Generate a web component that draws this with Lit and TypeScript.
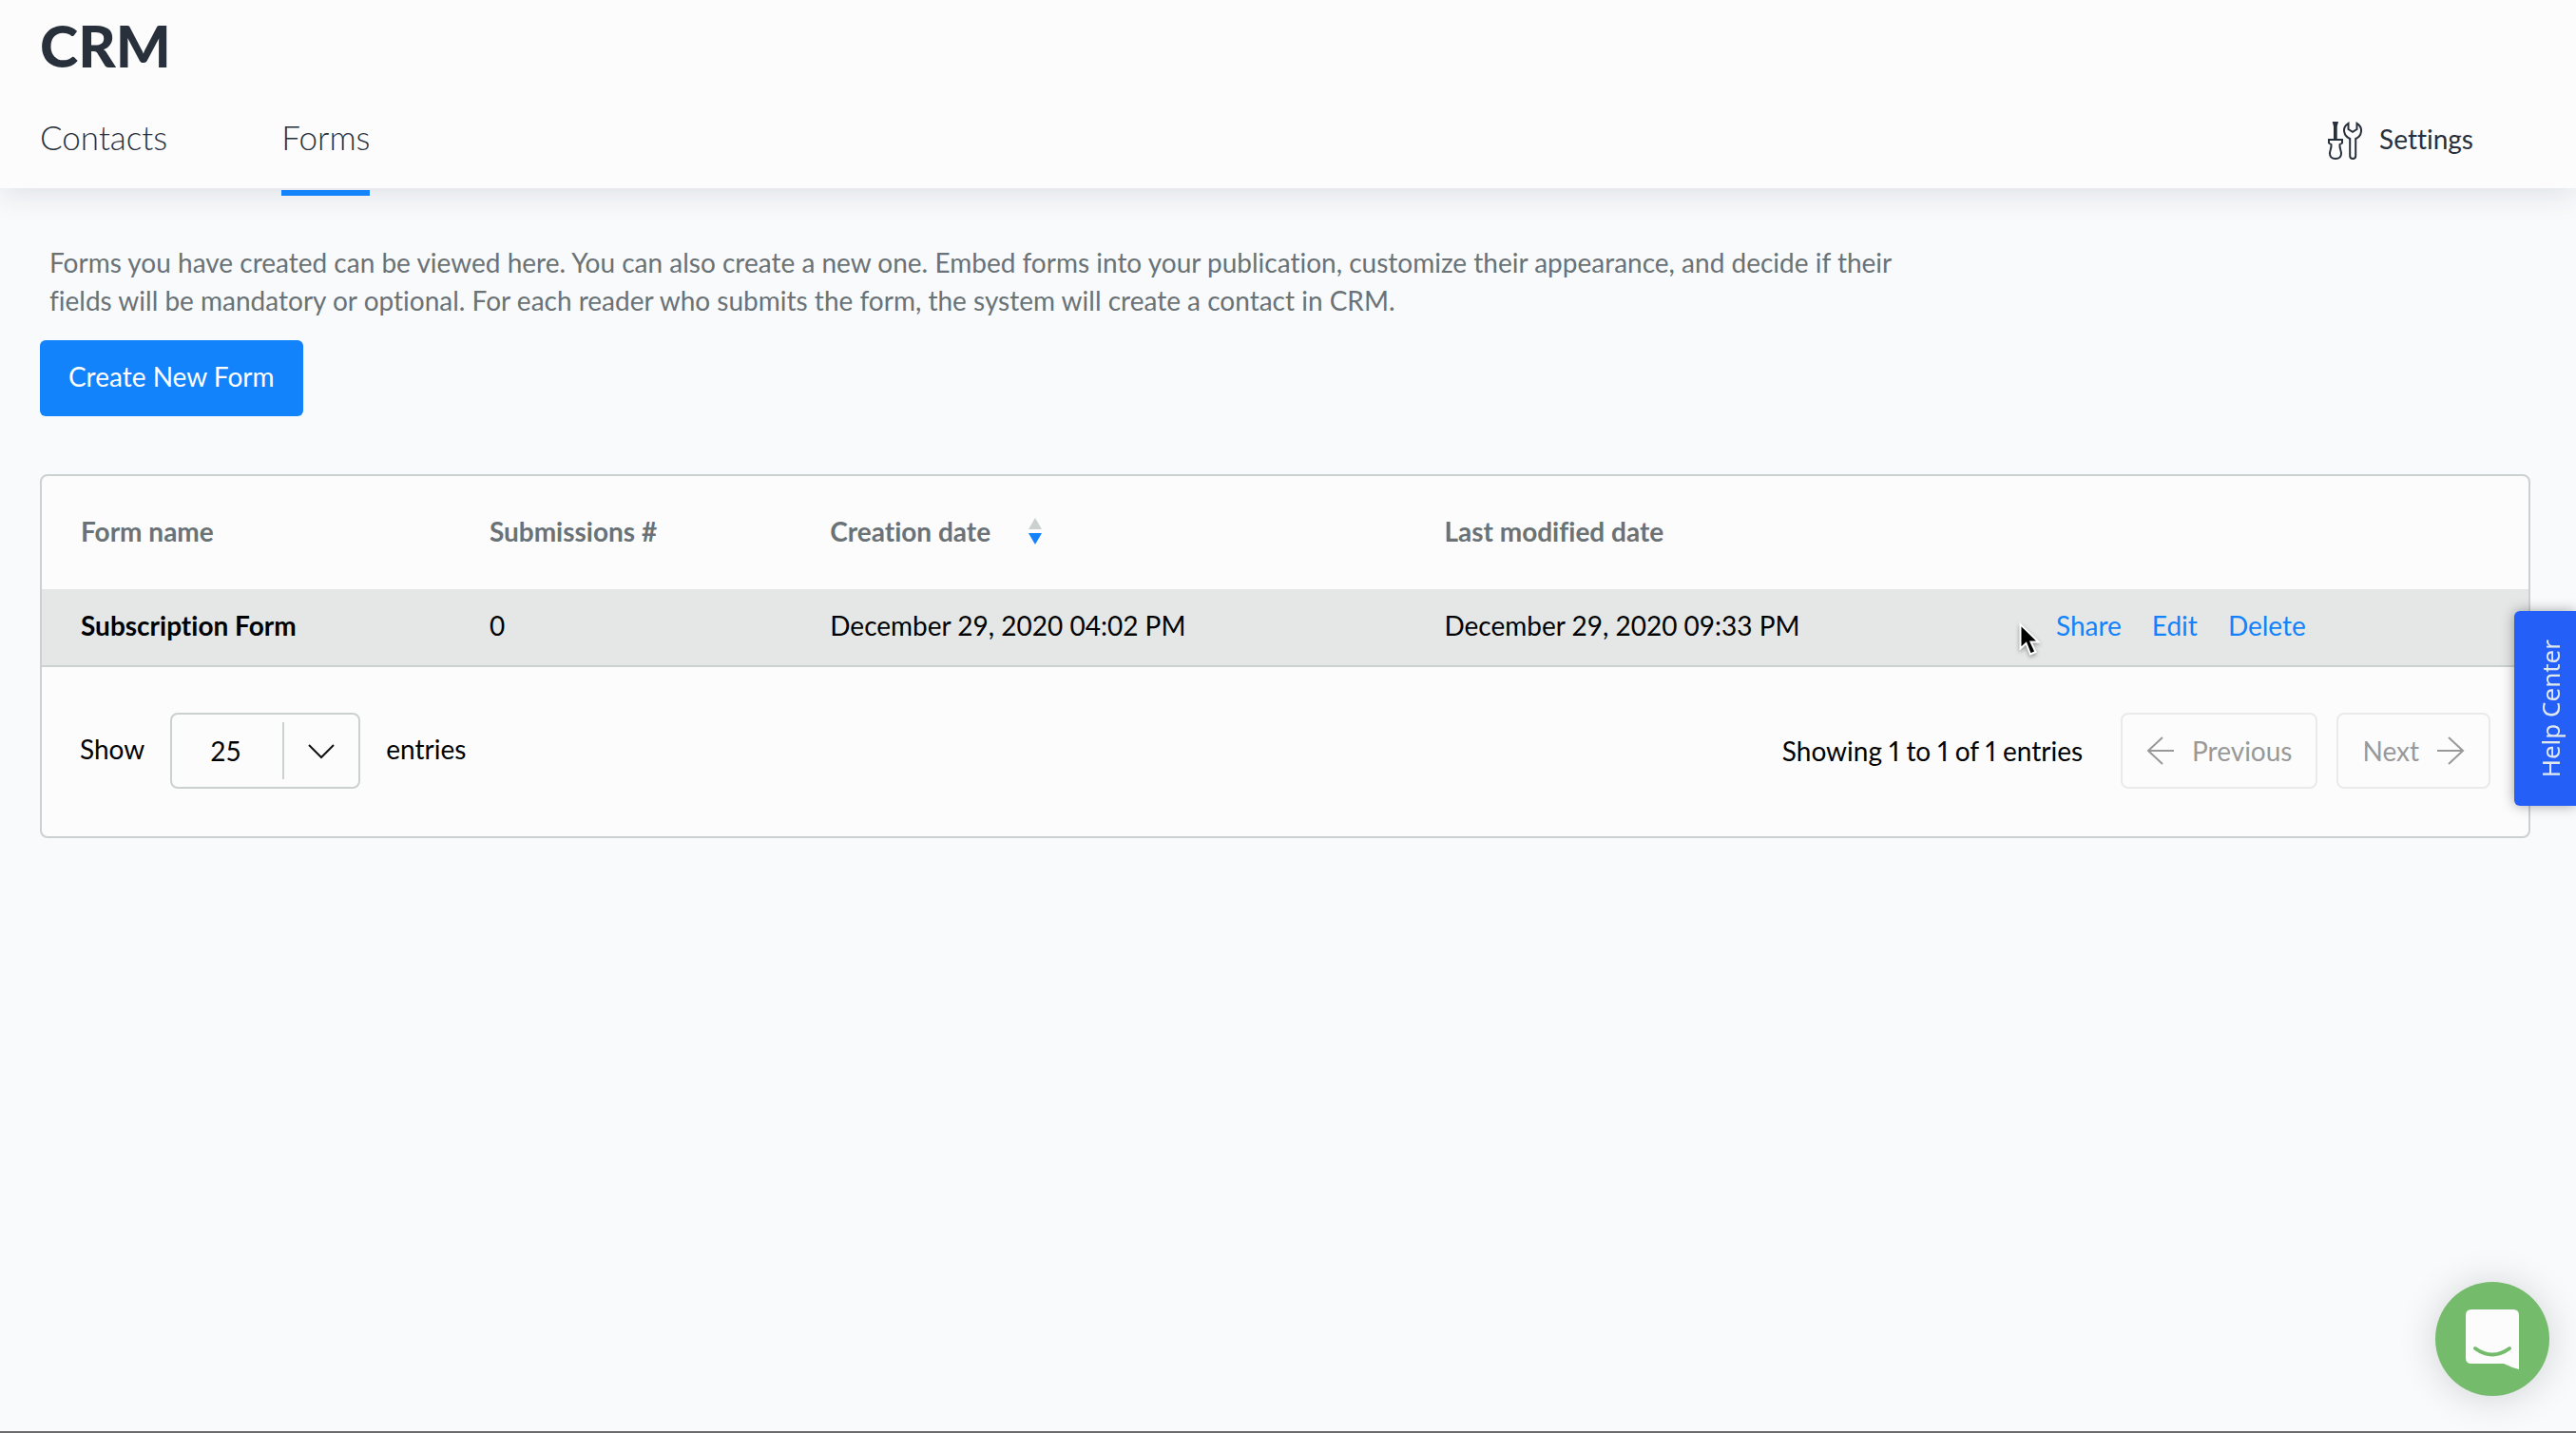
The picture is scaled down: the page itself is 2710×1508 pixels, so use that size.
import { LitElement, html, css, svg } from "lit";
import { customElement, property, state } from "lit/decorators.js";

interface FormEntry {
  name: string;
  submissions: number;
  created: string;
  modified: string;
}

const toolsIcon = svg`
  <svg width="36" height="42" viewBox="0 0 36 42" fill="none" stroke="#28303c" stroke-width="2" stroke-linejoin="miter" aria-hidden="true">
    <path d="M4.700 0h6.300l-1.300 5v13.500H6V5z" fill="#28303c" stroke="none"/>
    <path d="M1 19h14v3.500l-2.500 1.500c-.5 4 1.500 6 1.500 9.500 0 4-2.500 5.500-6 5.500s-6-1.500-6-5.500c0-3.500 2-5.500 1.500-9.500L1 22.500z"/>
    <path d="M21.500 1.800c-3.500 2.200-5 5.400-4.300 9 .6 3.400 2.800 5.800 6 7.200V36c0 4 6 4 6 0V18c3.200-1.400 5.200-3.800 5.700-7.200.6-3.600-.9-6.800-4.400-9V8L26 10.800 21.500 8z"/>
  </svg>`;

const arrowLeft = svg`
  <svg width="30" height="30" viewBox="0 0 30 30" fill="none" stroke="currentColor" stroke-width="2" aria-hidden="true">
    <path d="M29 15H2M17 1L2 15l15 14"/>
  </svg>`;

const arrowRight = svg`
  <svg width="30" height="30" viewBox="0 0 30 30" fill="none" stroke="currentColor" stroke-width="2" aria-hidden="true">
    <path d="M1 15h27M13 1l15 14-15 14"/>
  </svg>`;

@customElement("crm-header")
class CrmHeader extends LitElement {
  @property() current = "Forms";

  static styles = css`
    :host {
      display: block;
      position: relative;
      background: #fcfcfc;
      color: #28303c;
      box-shadow: 0 6px 30px rgba(40, 48, 60, 0.12);
    }
    .title {
      margin: 0;
      padding: 12px 42px 0;
      font-size: 61px;
      line-height: 72px;
      font-weight: 900;
    }
    .bar {
      display: flex;
      justify-content: space-between;
      align-items: flex-start;
      padding: 24px 108px 0 42px;
    }
    .tabs {
      display: flex;
      gap: 120px;
      height: 90px;
    }
    .tab {
      box-sizing: border-box;
      height: 98px;
      padding-top: 14px;
      font-size: 35px;
      line-height: 44px;
      font-weight: 300;
      color: inherit;
      text-decoration: none;
    }
    .tab.active {
      border-bottom: 6px solid #1283fb;
    }
    .settings {
      display: flex;
      align-items: center;
      gap: 18px;
      margin-top: 18px;
      padding: 0;
      border: 0;
      background: none;
      font: inherit;
      color: inherit;
    }
    .settings-label {
      padding-bottom: 6px;
      line-height: 40px;
    }
  `;

  render() {
    return html`
      <h1 class="title">CRM</h1>
      <div class="bar">
        <nav class="tabs">
          ${["Contacts", "Forms"].map(
            (t) => html`<a href="#${t.toLowerCase()}" class="tab ${t === this.current ? "active" : ""}">${t}</a>`
          )}
        </nav>
        <button class="settings" type="button">${toolsIcon}<span class="settings-label">Settings</span></button>
      </div>
    `;
  }
}

@customElement("forms-table")
class FormsTable extends LitElement {
  @property({ attribute: false }) entries: FormEntry[] = [];

  static styles = css`
    :host {
      display: block;
      border: 2px solid #cbd1d0;
      border-radius: 8px;
      background: #fcfcfc;
      color: #000;
    }
    .table {
      width: 100%;
      table-layout: fixed;
      border-collapse: separate;
      border-spacing: 0;
    }
    .c-name { width: 18%; }
    .c-count { width: 13.7%; }
    .c-created { width: 24.7%; }
    .c-modified { width: 24.6%; }
    th,
    td {
      box-sizing: border-box;
      padding: 0 0 4px;
      text-align: left;
      white-space: nowrap;
    }
    th {
      height: 119px;
      font-weight: 700;
      color: #6a7276;
    }
    td {
      height: 82px;
      background: #e4e7e5;
      border-bottom: 2px solid #cbd1d0;
    }
    th:first-child,
    td:first-child {
      padding-left: 41px;
    }
    .name {
      font-weight: 700;
    }
    .sort {
      display: inline-flex;
      align-items: center;
      gap: 40px;
      padding: 0;
      border: 0;
      background: none;
      font: inherit;
      color: inherit;
    }
    .actions {
      display: flex;
      gap: 32px;
    }
    .link {
      color: #1283fb;
      text-decoration: none;
    }
    .footer {
      display: flex;
      justify-content: space-between;
      align-items: center;
      padding: 48px 40px 50px;
    }
    .length {
      display: flex;
      align-items: center;
      gap: 27px;
    }
    .caption {
      padding-bottom: 4px;
    }
    .picker {
      position: relative;
      display: block;
    }
    .select {
      display: block;
      box-sizing: border-box;
      width: 200px;
      height: 80px;
      padding: 0 0 0 40px;
      border: 2px solid #cbd1d0;
      border-radius: 8px;
      background: transparent;
      appearance: none;
      font: inherit;
      color: #000;
    }
    .chevron {
      position: absolute;
      top: 10px;
      right: 0;
      pointer-events: none;
    }
    .pager {
      display: flex;
      align-items: center;
      gap: 20px;
    }
    .info {
      margin-right: 20px;
      font-variant-numeric: proportional-nums;
    }
    .page {
      display: flex;
      align-items: center;
      justify-content: center;
      gap: 18px;
      height: 80px;
      padding: 0 25px;
      border: 2px solid #e8ebea;
      border-radius: 8px;
      box-sizing: border-box;
      background: transparent;
      font: inherit;
      color: #999;
    }
  `;

  render() {
    return html`
      <table class="table">
        <colgroup>
          <col class="c-name" /><col class="c-count" /><col class="c-created" /><col class="c-modified" /><col />
        </colgroup>
        <thead>
          <tr>
            <th>Form name</th>
            <th>Submissions #</th>
            <th>
              <button class="sort" type="button">
                Creation date
                <svg width="14" height="28" viewBox="0 0 14 28" aria-hidden="true">
                  <path d="M7 0l7 12H0z" fill="#cbd1d0" />
                  <path d="M7 28l7-12H0z" fill="#1283fb" />
                </svg>
              </button>
            </th>
            <th>Last modified date</th>
            <th></th>
          </tr>
        </thead>
        <tbody>
          ${this.entries.map(
            (e) => html`
              <tr>
                <td class="name">${e.name}</td>
                <td>${e.submissions}</td>
                <td>${e.created}</td>
                <td>${e.modified}</td>
                <td>
                  <div class="actions">
                    <a class="link" href="#share">Share</a>
                    <a class="link" href="#edit">Edit</a>
                    <a class="link" href="#delete">Delete</a>
                  </div>
                </td>
              </tr>
            `
          )}
        </tbody>
      </table>
      <div class="footer">
        <div class="length">
          <label class="caption" for="length">Show</label>
          <span class="picker">
            <select id="length" class="select">
              <option>25</option>
              <option>50</option>
              <option>100</option>
            </select>
            <svg class="chevron" width="82" height="60" viewBox="0 0 82 60" fill="none" aria-hidden="true">
              <path d="M1 0v60" stroke="#cbd1d0" stroke-width="2" />
              <path d="M28 24l13 13 13-13" stroke="#111" stroke-width="2" />
            </svg>
          </span>
          <span class="caption">entries</span>
        </div>
        <div class="pager">
          <span class="info">Showing 1 to ${this.entries.length} of ${this.entries.length} entries</span>
          <button class="page" type="button" disabled>${arrowLeft}<span>Previous</span></button>
          <button class="page" type="button" disabled><span>Next</span>${arrowRight}</button>
        </div>
      </div>
    `;
  }
}

@customElement("app-root")
class AppRoot extends LitElement {
  @state() private entries: FormEntry[] = [
    {
      name: "Subscription Form",
      submissions: 0,
      created: "December 29, 2020 04:02 PM",
      modified: "December 29, 2020 09:33 PM",
    },
  ];

  static styles = css`
    :host {
      display: block;
      position: relative;
      box-sizing: border-box;
      min-height: 100vh;
      border-bottom: 2px solid #6b6b6e;
      background: #f8fafc;
      font-family: Lato, "Open Sans", sans-serif;
      font-size: 28px;
      line-height: 40px;
      font-variant-ligatures: none;
      overflow: hidden;
    }
    .content {
      padding: 58px 48px 0 42px;
    }
    .intro {
      max-width: 1980px;
      margin: 0 0 22px;
      padding-left: 10px;
      color: #6a7276;
    }
    .create {
      display: block;
      height: 80px;
      margin-bottom: 61px;
      padding: 0 30px 4px;
      border: 0;
      border-radius: 6px;
      background: #1283fb;
      font: inherit;
      color: #fff;
    }
    .help {
      position: fixed;
      right: 0;
      top: 643px;
      box-sizing: border-box;
      width: 65px;
      height: 205px;
      padding: 8px 0 0 10px;
      border: 0;
      border-radius: 6px 0 0 6px;
      background: #2460f8;
      box-shadow: 0 0 14px rgba(0, 0, 0, 0.35);
      font-family: "Noto Sans", sans-serif;
      font-size: 26px;
      color: #e0e8ee;
    }
    .help-text {
      display: inline-block;
      writing-mode: vertical-rl;
      transform: rotate(180deg);
    }
    .chat {
      position: fixed;
      right: 28px;
      bottom: 39px;
      width: 120px;
      height: 120px;
      padding: 0;
      border: 0;
      border-radius: 50%;
      background: #74bb6c;
      box-shadow: 0 2px 40px rgba(0, 0, 0, 0.16);
    }
    .bubble {
      display: block;
    }
    .pointer {
      position: absolute;
      left: 2122px;
      top: 652px;
      filter: drop-shadow(0 2px 2px rgba(0, 0, 0, 0.35));
      pointer-events: none;
    }
  `;

  render() {
    return html`
      <crm-header current="Forms"></crm-header>
      <main class="content">
        <p class="intro">
          Forms you have created can be viewed here. You can also create a new one. Embed forms into your publication,
          customize their appearance, and decide if their fields will be mandatory or optional. For each reader who
          submits the form, the system will create a contact in CRM.
        </p>
        <button class="create" type="button">Create New Form</button>
        <forms-table .entries=${this.entries}></forms-table>
      </main>
      <button class="help" type="button"><span class="help-text">Help Center</span></button>
      <button class="chat" type="button" aria-label="Open chat">
        <svg class="bubble" width="120" height="120" viewBox="0 0 120 120" aria-hidden="true">
          <path d="M38 29h44q6 0 6 6v57q-8-2-16-6H38q-6 0-6-6V35q0-6 6-6z" fill="#fcfcfc" />
          <path d="M42 70q18 13 36 0" fill="none" stroke="#74bb6c" stroke-width="4" stroke-linecap="round" />
        </svg>
      </button>
      <svg class="pointer" width="28" height="42" viewBox="0 0 28 42" aria-hidden="true">
        <path d="M3.500 5v25.500l6-5.500 4.500 11.500 5.500-2.500-5-10.500h8z" fill="#000" stroke="#fff" stroke-width="2" />
      </svg>
    `;
  }
}
